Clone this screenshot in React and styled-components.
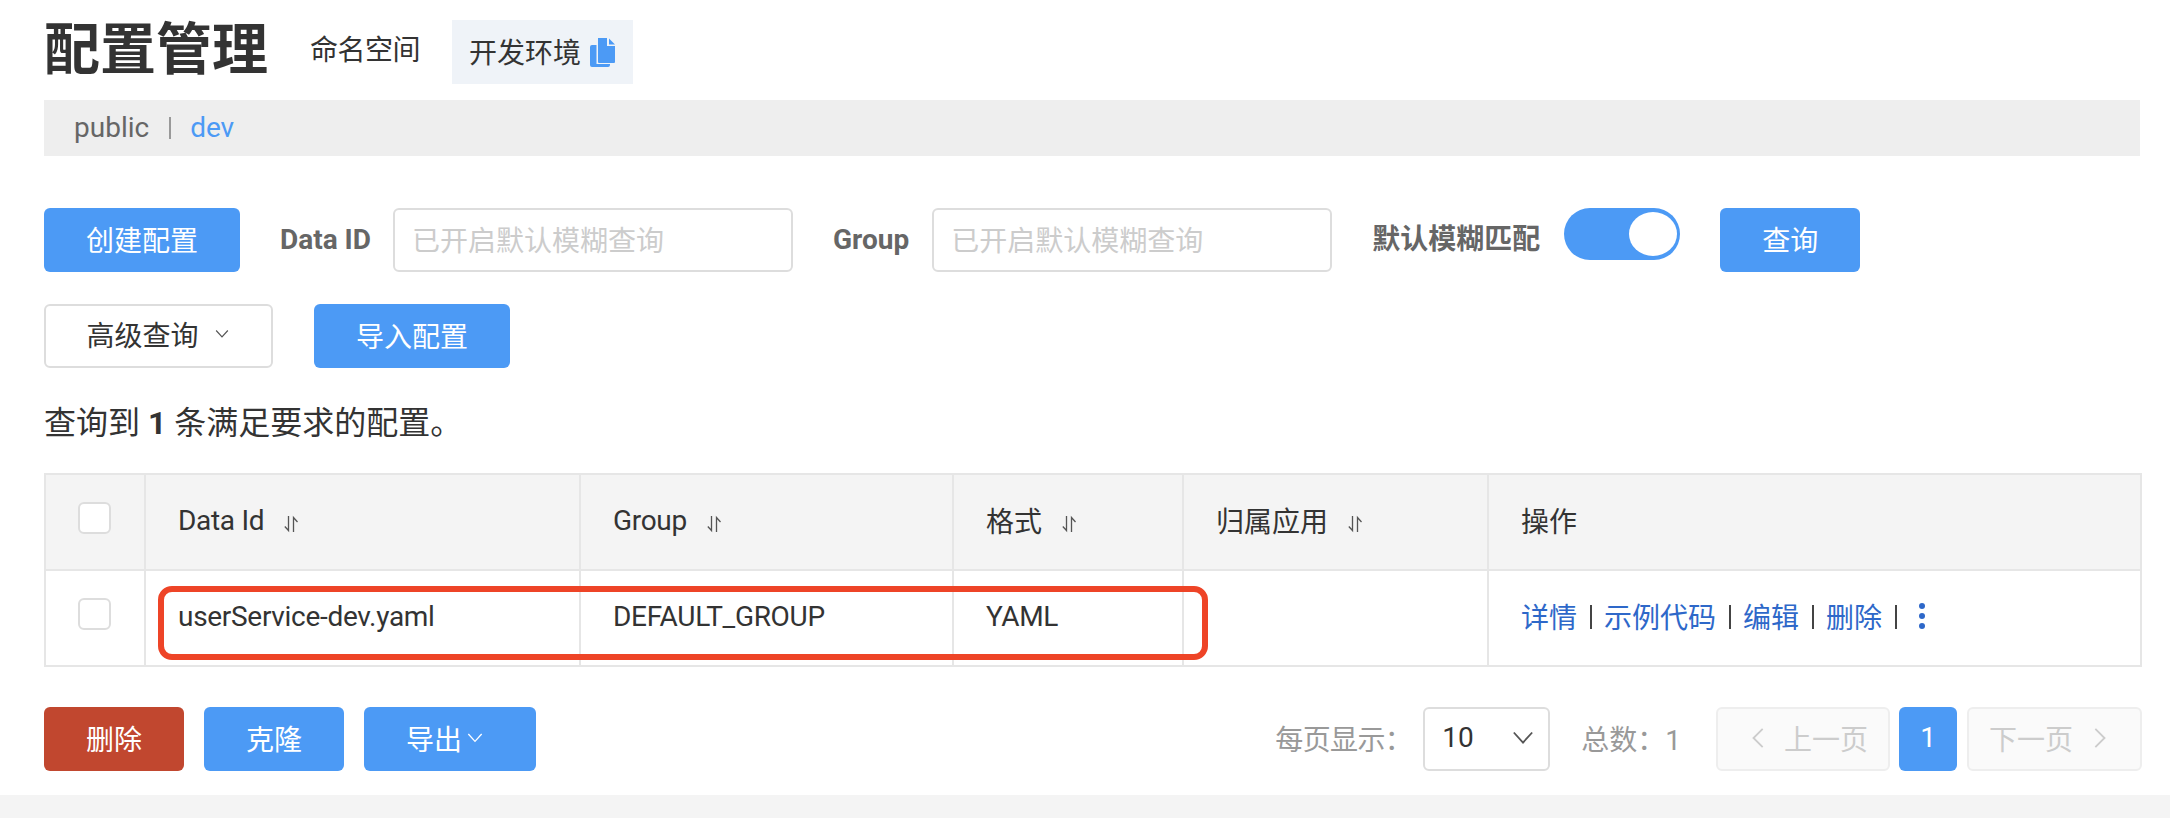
import React from 'react';
import styled, { createGlobalStyle } from 'styled-components';

const Blue = '#4c9af5';

const Global = createGlobalStyle`
  html, body { margin: 0; padding: 0; background: #fff; }
  body { font-family: Roboto, "Noto Sans CJK SC", sans-serif; font-size: 28px; color: #333; }
  * { box-sizing: border-box; }
`;

const Page = styled.div`
  height: 818px;
  display: flex;
  flex-direction: column;
  overflow: hidden;
`;
const Main = styled.main`
  flex: 1;
  padding: 20px 28px 0 44px;
`;
const Footer = styled.div`
  height: 23px;
  background: #f4f4f4;
`;
const TitleRow = styled.div`
  display: flex;
  align-items: center;
  height: 64px;
`;
const Title = styled.h1`
  margin: 0 42px 0 0;
  padding-bottom: 5px;
  font-size: 56px;
  line-height: 64px;
  font-weight: 700;
  color: #333;
`;
const NsLabel = styled.span`
  margin-right: 32px;
  padding-bottom: 2px;
  line-height: 40px;
  letter-spacing: -0.5px;
`;
const NsTag = styled.div`
  height: 64px;
  padding: 0 18px 3px 17px;
  display: flex;
  align-items: center;
  gap: 9px;
  background: #eff3f8;
  svg { margin-top: 3px; }
`;
const NsBar = styled.div`
  margin-top: 16px;
  width: 2096px;
  height: 56px;
  padding: 0 0 2px 30px;
  display: flex;
  align-items: center;
  background: #eeeeee;
  color: #666;
`;
const NsLink = styled.span`
  color: ${p => (p.$active ? Blue : '#666')};
`;
const NsSep = styled.span`
  width: 2px;
  height: 22px;
  margin: 2px 19px 0 20px;
  background: #999;
`;
const Toolbar = styled.div`
  display: flex;
  align-items: flex-start;
  margin-top: ${p => p.$top}px;
`;
const Button = styled.div`
  flex: none;
  width: ${p => p.$w}px;
  height: 64px;
  margin-left: ${p => p.$left || 0}px;
  padding-bottom: 3px;
  display: flex;
  align-items: center;
  justify-content: center;
  gap: 6px;
  border-radius: 6px;
  background: ${p => p.$bg || Blue};
  color: #fff;
`;
const OutlineButton = styled(Button)`
  background: #fff;
  color: #333;
  border: 2px solid #ddd;
  gap: 16px;
  padding: 0 2px 5px 0;
`;
const MenuButton = styled(Button)`
  justify-content: flex-start;
  padding-left: 42px;
  gap: 5px;
`;
const FieldLabel = styled.label`
  height: 64px;
  line-height: 64px;
  margin: 0 ${p => p.$right}px 0 ${p => p.$left}px;
  font-weight: 700;
  color: #666;
`;
const FieldInput = styled.div`
  flex: none;
  width: 400px;
  height: 64px;
  padding: 0 0 3px 17px;
  display: flex;
  align-items: center;
  border: 2px solid #ddd;
  border-radius: 6px;
  color: #ccc;
`;
const SwitchTrack = styled.div`
  flex: none;
  width: 116px;
  height: 52px;
  padding-right: 3px;
  display: flex;
  align-items: center;
  justify-content: flex-end;
  border-radius: 26px;
  background: ${Blue};
`;
const SwitchKnob = styled.div`
  width: 48px;
  height: 44px;
  border-radius: 50%;
  background: #fff;
`;
const Result = styled.div`
  margin-top: 35px;
  height: 40px;
  font-size: 32px;
  line-height: 40px;
  b { font-weight: 700; }
`;
const TableWrap = styled.div`
  position: relative;
  margin-top: 30px;
  width: 2098px;
  border: 2px solid #e6e6e6;
`;
const Row = styled.div`
  display: grid;
  grid-template-columns: 100px 435px 373px 230px 305px 1fr;
  height: ${p => p.$h}px;
  background: ${p => (p.$head ? '#f4f4f4' : '#fff')};
  border-bottom: ${p => (p.$head ? '2px solid #e6e6e6' : 'none')};
`;
const Cell = styled.div`
  display: flex;
  align-items: center;
  gap: 20px;
  padding: 0 0 4px 32px;
  border-right: 2px solid #e6e6e6;
  letter-spacing: ${p => (p.$latin ? '-0.3px' : '0')};
  &:last-child { border-right: none; }
  svg { margin-top: 8px; }
`;
const Check = styled.div`
  width: 33px;
  height: 32px;
  margin-bottom: 4px;
  border: 2px solid #ddd;
  border-radius: 6px;
  background: #fff;
`;
const Ops = styled(Cell)`
  gap: 12.5px;
  svg { margin: 0 0 0 8px; }
`;
const OpLink = styled.span`
  color: #2e68c9;
`;
const OpSep = styled.span`
  width: 2px;
  height: 24px;
  margin-top: 2px;
  background: #444;
`;
const Highlight = styled.div`
  position: absolute;
  left: 112px;
  top: 111px;
  width: 1050px;
  height: 74px;
  border: 6px solid #ee4427;
  border-radius: 14px;
  pointer-events: none;
`;
const Bottom = styled.div`
  display: flex;
  justify-content: space-between;
  margin-top: 40px;
  width: 2098px;
`;
const Group = styled.div`
  display: flex;
  align-items: center;
`;
const Muted = styled.span`
  color: #999;
  margin-right: ${p => p.$right}px;
  padding-bottom: 3px;
  letter-spacing: ${p => p.$spacing || 0}px;
`;
const PageSelect = styled.div`
  width: 127px;
  height: 64px;
  padding: 0 14px 3px 17px;
  margin-right: 31px;
  display: flex;
  align-items: center;
  justify-content: space-between;
  border: 2px solid #ddd;
  border-radius: 6px;
  color: #333;
`;
const PageNav = styled.div`
  width: ${p => p.$w}px;
  height: 64px;
  padding: 0 ${p => p.$right}px 3px ${p => p.$left}px;
  display: flex;
  align-items: center;
  justify-content: space-between;
  background: #fafafa;
  border: 2px solid #eee;
  border-radius: 6px;
  color: #ccc;
`;
const PageNum = styled.div`
  width: 58px;
  height: 64px;
  margin: 0 10px 0 9px;
  padding-bottom: 3px;
  display: flex;
  align-items: center;
  justify-content: center;
  border-radius: 6px;
  background: ${Blue};
  color: #fff;
`;

const Chevron = ({ color = '#555', size = 14, dir = 'down' }) => {
  const d = {
    down: 'M1 3 L6 8.5 L11 3',
    left: 'M8 1 L3 6 L8 11',
    right: 'M4 1 L9 6 L4 11',
  }[dir];
  return (
    <svg width={size} height={size} viewBox="0 0 12 12" fill="none" stroke={color} strokeWidth="1">
      <path d={d} />
    </svg>
  );
};

const SortIcon = () => (
  <svg width="15" height="18" viewBox="0 0 15 18" fill="none" stroke="#555" strokeWidth="1.3">
    <path d="M4.5 1 V15.5 L0.8 11.5" />
    <path d="M9.5 17 V2.5 L13.5 7" />
  </svg>
);

const CopyIcon = () => (
  <svg width="25" height="29" viewBox="0 0 25 29">
    <path d="M0 9 Q0 7 2 7 H6.5 V26 H20 V27 Q20 29 18 29 H2 Q0 29 0 27 Z" fill={Blue} />
    <path d="M8 0 H17 V8 H25 V24 Q25 25 24 25 H9 Q8 25 8 24 Z" fill={Blue} />
    <path d="M19 0.5 L25 6.5 H19 Z" fill={Blue} />
  </svg>
);

const Dots = () => (
  <svg width="10" height="28" viewBox="0 0 10 28" fill="#2e68c9">
    <circle cx="5" cy="4" r="3" />
    <circle cx="5" cy="14" r="3" />
    <circle cx="5" cy="24" r="3" />
  </svg>
);

const headers = [
  ['Data Id', true, true],
  ['Group', true, true],
  ['格式', true, false],
  ['归属应用', true, false],
  ['操作', false, false],
];

export default function App() {
  return (
    <Page>
      <Global />
      <Main>
        <TitleRow>
          <Title>配置管理</Title>
          <NsLabel>命名空间</NsLabel>
          <NsTag>
            开发环境
            <CopyIcon />
          </NsTag>
        </TitleRow>
        <NsBar>
          <NsLink>public</NsLink>
          <NsSep />
          <NsLink $active>dev</NsLink>
        </NsBar>
        <Toolbar $top={52}>
          <Button $w={196}>创建配置</Button>
          <FieldLabel $left={40} $right={22}>Data ID</FieldLabel>
          <FieldInput>已开启默认模糊查询</FieldInput>
          <FieldLabel $left={40} $right={23}>Group</FieldLabel>
          <FieldInput>已开启默认模糊查询</FieldInput>
          <FieldLabel $left={40} $right={24}>默认模糊匹配</FieldLabel>
          <SwitchTrack><SwitchKnob /></SwitchTrack>
          <Button $w={140} $left={40}>查询</Button>
        </Toolbar>
        <Toolbar $top={32}>
          <OutlineButton $w={229}>
            高级查询
            <Chevron />
          </OutlineButton>
          <Button $w={196} $left={41}>导入配置</Button>
        </Toolbar>
        <Result>查询到 <b>1</b> 条满足要求的配置。</Result>
        <TableWrap>
          <Row $head $h={96}>
            <Cell><Check /></Cell>
            {headers.map(([label, sortable, latin]) => (
              <Cell key={label} $latin={latin}>
                {label}
                {sortable && <SortIcon />}
              </Cell>
            ))}
          </Row>
          <Row $h={94}>
            <Cell><Check /></Cell>
            <Cell $latin>userService-dev.yaml</Cell>
            <Cell $latin>DEFAULT_GROUP</Cell>
            <Cell $latin>YAML</Cell>
            <Cell />
            <Ops>
              <OpLink>详情</OpLink>
              <OpSep />
              <OpLink>示例代码</OpLink>
              <OpSep />
              <OpLink>编辑</OpLink>
              <OpSep />
              <OpLink>删除</OpLink>
              <OpSep />
              <Dots />
            </Ops>
          </Row>
          <Highlight />
        </TableWrap>
        <Bottom>
          <Group>
            <Button $w={140} $bg="#c1472f">删除</Button>
            <Button $w={140} $left={20}>克隆</Button>
            <MenuButton $w={172} $left={20}>
              导出
              <Chevron color="#fff" size={16} />
            </MenuButton>
          </Group>
          <Group>
            <Muted $right={11} $spacing={-0.6}>每页显示：</Muted>
            <PageSelect>
              10
              <Chevron size={22} />
            </PageSelect>
            <Muted $right={35}>总数：1</Muted>
            <PageNav $w={174} $left={30} $right={20}>
              <Chevron color="#ccc" size={22} dir="left" />
              上一页
            </PageNav>
            <PageNum>1</PageNum>
            <PageNav $w={175} $left={20} $right={30}>
              下一页
              <Chevron color="#ccc" size={22} dir="right" />
            </PageNav>
          </Group>
        </Bottom>
      </Main>
      <Footer />
    </Page>
  );
}
